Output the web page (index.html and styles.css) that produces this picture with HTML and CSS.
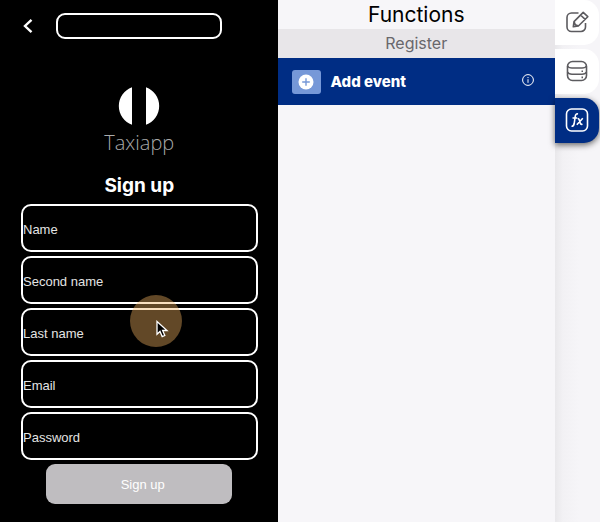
FILE: index.html
```html
<!DOCTYPE html>
<html lang="en">
<head>
<meta charset="utf-8">
<meta name="viewport" content="width=device-width, initial-scale=1">
<title>Functions</title>
<link rel="stylesheet" href="styles.css">
</head>
<body>
<div class="app">
  <main class="phone">
    <header class="topbar">
      <button class="back" type="button" aria-label="Back">
        <svg width="10" height="16" viewBox="0 0 10 16"><path d="M8.500 1.800 2 8 8.500 14.200"/></svg>
      </button>
      <input class="title-box" type="text" aria-label="Title">
    </header>
    <div class="brand">
      <svg class="logo" width="42" height="40" viewBox="0 0 42 40"><path d="M14 1.200V38.800A20 20 0 0 1 14 1.200ZM28 1.200V38.800A20 20 0 0 0 28 1.200Z"/></svg>
      <span class="brand-name">Taxiapp</span>
    </div>
    <h1 class="heading">Sign up</h1>
    <form class="form">
      <input class="field" type="text" placeholder="Name" aria-label="Name">
      <input class="field" type="text" placeholder="Second name" aria-label="Second name">
      <input class="field" type="text" placeholder="Last name" aria-label="Last name">
      <input class="field" type="email" placeholder="Email" aria-label="Email">
      <input class="field" type="password" placeholder="Password" aria-label="Password">
      <button class="submit" type="button">Sign up</button>
    </form>
    <div class="pointer">
      <svg width="13" height="18" viewBox="0 0 13 18"><path d="M1 1.500V14.200L4 11.400 6.200 16.600 8.800 15.500 6.600 10.500H11Z"/></svg>
    </div>
  </main>
  <section class="panel">
    <h2 class="panel-title">Functions</h2>
    <p class="panel-sub">Register</p>
    <div class="event">
      <button class="add" type="button">
        <span class="add-icon">
          <svg width="16" height="16" viewBox="0 0 16 16"><circle cx="8" cy="8" r="7.500" fill="#fff"/><path d="M8 4.200V11.800M4.200 8H11.800" stroke="#7698d8" stroke-width="1.400"/></svg>
        </span>
        <span>Add event</span>
      </button>
      <button class="info" type="button" aria-label="Info">
        <svg width="12" height="12" viewBox="0 0 12 12"><circle cx="6" cy="6" r="5.400"/><path d="M6 5.200V8.800M6 3V4.100"/></svg>
      </button>
    </div>
  </section>
  <nav class="rail">
    <button class="tab" type="button" aria-label="Edit">
      <svg width="24" height="24" viewBox="0 0 24 24"><path d="M13.500 3H6.500A4.500 4.500 0 0 0 2 7.500V17A4.500 4.500 0 0 0 6.500 21.500H16A4.500 4.500 0 0 0 20.500 17V13"/><path d="M8.300 16.800 9 11.600 18.200 2.400 22.800 6.700 13.400 16ZM15.500 5 20.200 9.300M9 11.600 10.300 14.800 13.400 16"/></svg>
    </button>
    <button class="tab" type="button" aria-label="Database">
      <svg width="24" height="24" viewBox="0 0 24 24"><rect x="2.500" y="2.500" width="19" height="19" rx="5"/><path d="M2.500 7Q3.500 9 7 9H17Q20.500 9 21.500 7M2.500 13Q3.500 15.200 7 15.200H17Q20.500 15.200 21.500 13M16.500 12.200H18M16.500 18.400H18"/></svg>
    </button>
    <button class="tab tab-active" type="button" aria-label="Functions">
      <svg width="24" height="24" viewBox="0 0 24 24"><rect x="1.500" y="1" width="21" height="22" rx="5"/><path d="M6.500 18.300Q8.700 18.500 9.200 15.500L10.200 8.500Q10.700 5.300 13 6M7.500 10H12M12.500 10.500Q13.800 10.300 14.300 12L15.200 15Q15.700 16.800 17.500 16.300M17.800 10.300 11.800 16.700"/></svg>
    </button>
  </nav>
</div>
</body>
</html>
```
FILE: styles.css
```css
* {
  box-sizing: border-box;
}

body {
  margin: 0;
  background: #f5f4f7;
  font-family: Inter, "Liberation Sans", sans-serif;
}

button {
  border: 0;
  padding: 0;
  background: none;
  font: inherit;
  color: inherit;
}

svg {
  display: block;
}

.app {
  display: grid;
  grid-template-columns: minmax(0, 1fr) minmax(0, 1fr) 45px;
  min-height: 100vh;
}

.phone {
  position: relative;
  padding: 13px 20px 18px 21px;
  background: #000;
  color: #fff;
}

.topbar {
  display: flex;
  align-items: center;
  gap: 23px;
}

.back {
  padding-left: 2px;
}

.back svg {
  fill: none;
  stroke: #fff;
  stroke-width: 2.4;
}

.title-box {
  flex: 1;
  min-width: 0;
  height: 26px;
  margin-right: 36px;
  border: 2px solid #fff;
  border-radius: 9px;
  background: transparent;
  color: #fff;
}

.brand {
  display: flex;
  flex-direction: column;
  align-items: center;
  padding-top: 47px;
}

.logo {
  fill: #fff;
}

.brand-name {
  margin-top: 2px;
  font-family: "Open Sans", sans-serif;
  font-weight: 300;
  font-size: 20px;
  line-height: 30px;
  color: #aaa;
}

.heading {
  margin: 14px 0 4px;
  font-size: 19px;
  font-weight: 700;
  line-height: 28px;
  text-align: center;
}

.form {
  display: flex;
  flex-direction: column;
  gap: 4px;
}

.field {
  width: 100%;
  height: 48px;
  padding: 2px 0 0;
  border: 2px solid #fff;
  border-radius: 10px;
  background: transparent;
  color: #fff;
  font: 13px/20px "Liberation Sans", sans-serif;
}

.field::placeholder {
  color: #e4e4e4;
  opacity: 1;
}

.submit {
  height: 40px;
  margin: 0 26px 0 25px;
  padding: 2px 0 0 8px;
  border-radius: 9px;
  background: #bfbdc0;
  color: #fff;
  font: 13px/20px "Liberation Sans", sans-serif;
}

.pointer {
  position: absolute;
  top: 295px;
  left: 130px;
  width: 52px;
  height: 52px;
  padding: 25px 0 0 26px;
  border-radius: 50%;
  background: rgba(244, 181, 98, 0.4);
}

.pointer svg {
  fill: #000;
  stroke: #fff;
  stroke-width: 1.3;
}

.panel {
  background: #f7f6f9;
}

.panel-title {
  margin: 0;
  font-size: 21px;
  font-weight: 400;
  line-height: 29px;
  text-align: center;
  color: #000;
}

.panel-sub {
  margin: 0;
  background: #e8e6e9;
  font-size: 16px;
  line-height: 29px;
  text-align: center;
  color: #69686c;
}

.event {
  display: flex;
  align-items: center;
  justify-content: space-between;
  height: 47px;
  padding: 0 21px 0 14px;
  background: #002d84;
  color: #fff;
}

.add {
  display: flex;
  align-items: center;
  gap: 10px;
  font-size: 15px;
  font-weight: 800;
}

.add-icon {
  display: grid;
  place-items: center;
  width: 29px;
  height: 24px;
  border-radius: 3px;
  background: #7698d8;
}

.info {
  padding-bottom: 4px;
}

.info svg {
  fill: none;
  stroke: #fff;
  stroke-width: 1;
}

.rail {
  display: flex;
  flex-direction: column;
  gap: 4px;
  padding-right: 1px;
  background: linear-gradient(90deg, #e9e8eb, #f2f1f4 8px, #f6f5f8 24px);
}

.tab {
  display: grid;
  place-items: center;
  height: 45px;
  padding-bottom: 2px;
  border-radius: 0 15px 15px 0;
  background: #fff;
}

.tab svg {
  fill: none;
  stroke: #5c5b5f;
  stroke-width: 1.6;
  stroke-linejoin: round;
}

.tab-active {
  background: #002d84;
  box-shadow: 0 2px 6px rgba(0, 0, 0, 0.6);
}

.tab-active svg {
  stroke: #fff;
}
```
